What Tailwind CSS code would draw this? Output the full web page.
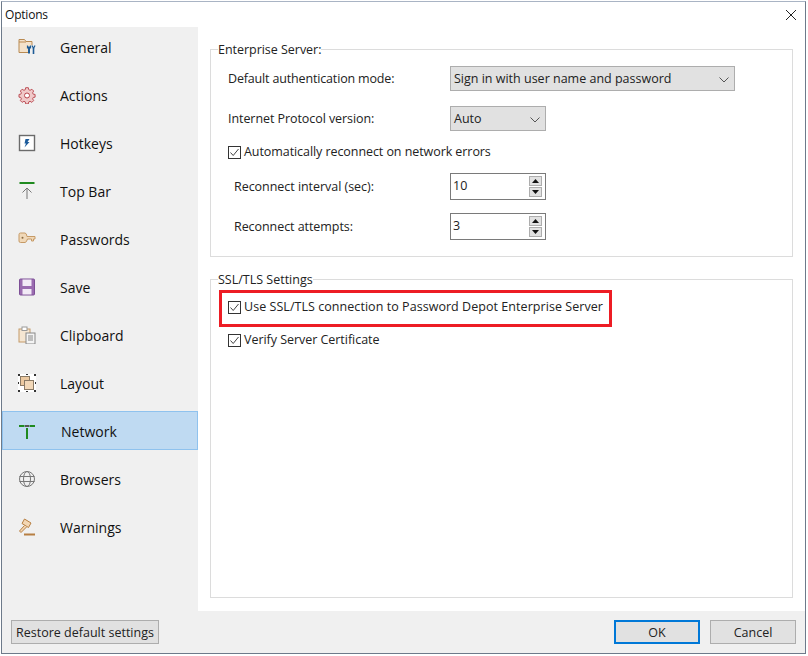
<!DOCTYPE html>
<html><head><meta charset="utf-8"><script src="https://cdn.jsdelivr.net/npm/@tailwindcss/browser@4"></script></head>
<body class="bg-white w-[808px] h-[656px] overflow-hidden font-['Open_Sans','Noto_Sans',sans-serif] text-[#111]">
<div class="ml-px mt-px w-[805px] h-[653px] border border-[#6d7a8a] border-t-[#a9b4c4] bg-white flex flex-col">
  <div class="h-[25px] flex items-center justify-between pl-[3px] pr-[8px] text-[12px] tracking-[-0.2px]">
    <span>Options</span>
    <svg width="12" height="12" viewBox="0 0 12 12" stroke="#222" stroke-width="1" fill="none"><path d="M1 1l10 10M11 1L1 11"/></svg>
  </div>
  <div class="flex-1 flex min-h-0">
    <nav class="w-[196px] bg-[#f0f0f0] flex flex-col gap-[9px] text-[14px] pb-[3px]">
      <div class="h-[39px] flex items-center pl-[16px] gap-[24px]"><svg width="18" height="18" viewBox="0 0 18 18" fill="none"><path d="M10 14.500H1V1.500H6.500L8 3.500H14V7" stroke="#b98a52" fill="#f3e2cb"/><path d="M1 4h7" stroke="#b98a52"/><path d="M11 8.500v7" stroke="#1e5c96" stroke-width="2"/><path d="M9.500 7.500v2.500h3V7.500" stroke="#1e5c96" stroke-width="1.200"/><path d="M15.500 10v6" stroke="#1e5c96" stroke-width="1.600"/><path d="M14 7.500l1.500 3 1.500-3" stroke="#1e5c96" stroke-width="1.200"/></svg><span class="pt-[2px]">General</span></div>
      <div class="h-[39px] flex items-center pl-[16px] gap-[24px]"><svg width="18" height="18" viewBox="0 0 18 18" fill="#f0c9c9" stroke="#b8434b"><path d="M7.500 1h3l.4 2.200 1.500.7 2-1.200 2 2-1.200 2 .7 1.500 2.100.3v3l-2.100.4-.7 1.500 1.200 1.900-2 2-2-1.200-1.500.7-.4 2.200h-3l-.4-2.200-1.500-.7-2 1.200-2-2 1.200-1.900-.7-1.500-2-.4v-3l2-.3.7-1.500-1.200-2 2-2 2 1.200 1.500-.7Z" transform="translate(.9 .8) scale(.9)"/><circle cx="9" cy="9.500" r="2.500" fill="#fff"/></svg><span class="pt-[2px]">Actions</span></div>
      <div class="h-[39px] flex items-center pl-[16px] gap-[24px]"><svg width="18" height="18" viewBox="0 0 18 18"><rect x="1.500" y="1.500" width="15" height="15" fill="#fff" stroke="#6b6b6b" stroke-width="1.400"/><path d="M11.500 5H7.500L6.500 9.500H8L6.500 13.500 11.500 8H9.500L11.500 5Z" fill="#1d5c9c"/></svg><span class="pt-[2px]">Hotkeys</span></div>
      <div class="h-[39px] flex items-center pl-[16px] gap-[24px]"><svg width="18" height="18" viewBox="0 0 18 18" fill="none"><path d="M1.500 1h15" stroke="#1f8a1f" stroke-width="2"/><path d="M9 17V6M4.500 10.500 9 6l4.500 4.500" stroke="#777"/></svg><span class="pt-[2px]">Top Bar</span></div>
      <div class="h-[39px] flex items-center pl-[16px] gap-[24px]"><svg width="18" height="18" viewBox="0 0 18 18" fill="#f0d8b8" stroke="#c69a66"><path d="M1 4.500Q1 3 2.500 3H7Q8.500 3 9 6.500H17V9H15.500V11H13.500V9H9.500Q8.500 12.500 7 12.500H2.500Q1 12.500 1 11Z"/><circle cx="4.500" cy="7.800" r="1" fill="#8a6a40" stroke="none"/></svg><span class="pt-[2px]">Passwords</span></div>
      <div class="h-[39px] flex items-center pl-[16px] gap-[24px]"><svg width="18" height="18" viewBox="0 0 18 18"><rect x="1.500" y="1" width="15" height="16" rx="1" fill="#9a6bb0" stroke="#7d4f96"/><rect x="4.500" y="1.500" width="9" height="6.500" fill="#f2eaf6"/><rect x="4.500" y="11" width="9" height="5.500" fill="#f2eaf6"/></svg><span class="pt-[2px]">Save</span></div>
      <div class="h-[39px] flex items-center pl-[16px] gap-[24px]"><svg width="18" height="18" viewBox="0 0 18 18"><rect x="1" y="3" width="11" height="13" fill="#f5e6d2" stroke="#c49a68"/><rect x="4" y="1" width="5" height="3.500" fill="#fff" stroke="#999"/><rect x="8" y="7" width="9" height="11" fill="#f4f4f4" stroke="#888"/><path d="M10 10h5M10 12h5M10 14h5" stroke="#888"/></svg><span class="pt-[2px]">Clipboard</span></div>
      <div class="h-[39px] flex items-center pl-[16px] gap-[24px]"><svg width="18" height="18" viewBox="0 0 18 18"><rect x="0" y="0" width="18" height="18" fill="#fff"/><rect x="2.500" y="2.500" width="9" height="9" fill="#ecc9a0" stroke="#8a7a65"/><rect x="6.500" y="6.500" width="9" height="9" fill="#f2d8b8" stroke="#8a7a65"/><path d="M0 0h2v2H0zM16 0h2v2h-2zM0 16h2v2H0zM16 16h2v2h-2zM8 0h2v1H8zM8 17h2v1H8zM0 8h1v2H0zM17 8h1v2h-1z" fill="#333"/></svg><span class="pt-[2px]">Layout</span></div>
      <div class="h-[39px] flex items-center pl-[15px] gap-[25px] bg-[#bfdaf2] border border-[#8fc2ee]"><svg width="18" height="18" viewBox="0 0 18 18" fill="none" stroke="#1f8a1f" stroke-width="2"><path d="M1 4h5.500M11.500 4H17M9 6v11"/><rect x="7" y="3" width="4" height="2" fill="#555" stroke="none"/></svg><span class="pt-[2px]">Network</span></div>
      <div class="h-[39px] flex items-center pl-[16px] gap-[24px]"><svg width="18" height="18" viewBox="0 0 18 18" fill="none" stroke="#777"><circle cx="9" cy="9" r="7.500"/><ellipse cx="9" cy="9" rx="3.500" ry="7.500"/><path d="M1.500 6.500h15M1.500 11.500h15"/></svg><span class="pt-[2px]">Browsers</span></div>
      <div class="h-[39px] flex items-center pl-[16px] gap-[24px]"><svg width="18" height="18" viewBox="0 0 18 18" stroke="#b77f42" fill="#f3d7b4"><path d="M6.500 1 13 5 10.500 9.500 4 5.500Z"/><path d="M6.500 7.500 1.500 13 3 14.500 8.500 9"/><path d="M6 16.500h11" stroke-width="2"/></svg><span class="pt-[2px]">Warnings</span></div>
    </nav>
    <main class="flex-1 bg-white px-[12px] relative text-[12.500px] text-[#222]">
      <fieldset class="mt-[14px] h-[216px] border border-[#dcdcdc] pl-[17px] flex flex-col">
        <legend class="-ml-[10px] pt-px leading-[16px] tracking-[-0.03px]">Enterprise Server:</legend>
        <div class="flex items-center h-[25px] mt-[8px]"><span class="w-[222px] pt-px shrink-0 tracking-[-0.16px]">Default authentication mode:</span><div class="w-[285px] h-[25px] pt-[2px] bg-[#e1e1e1] border border-[#adadad] flex items-center justify-between pl-[3px] pr-[5px]"><span>Sign in with user name and password</span><svg width="10" height="6" viewBox="0 0 10 6" fill="none" stroke="#555"><path d="M.5.500 5 5 9.500.500"/></svg></div></div>
        <div class="flex items-center h-[25px] mt-[15px]"><span class="w-[222px] pt-px shrink-0 tracking-[-0.07px]">Internet Protocol version:</span><div class="w-[96px] h-[25px] pt-[2px] bg-[#e1e1e1] border border-[#adadad] flex items-center justify-between pl-[3px] pr-[5px]"><span>Auto</span><svg width="10" height="6" viewBox="0 0 10 6" fill="none" stroke="#555"><path d="M.5.500 5 5 9.500.500"/></svg></div></div>
        <label class="flex items-center gap-[3px] mt-[11px] h-[20px] tracking-[-0.07px]"><span class="w-[13px] h-[13px] border border-[#333] flex items-center justify-center"><svg width="11" height="11" viewBox="0 0 11 11" fill="none" stroke="#444"><path d="M1.500 5.500 4.200 8.500 9.500 2"/></svg></span>Automatically reconnect on network errors</label>
        <div class="flex items-center h-[27px] mt-[11px] pl-[6px]"><span class="w-[216px] pt-[2px] shrink-0 tracking-[-0.04px]">Reconnect interval (sec):</span><div class="w-[96px] h-[27px] border border-[#7a7a7a] flex items-center justify-between pl-[2px] pr-[3px]"><span>10</span><div class="flex flex-col gap-px"><div class="w-[13px] h-[10px] bg-[#e1e1e1] border border-[#adadad] flex items-center justify-center"><svg width="7" height="4" viewBox="0 0 7 4"><path d="M3.500 0 7 4H0Z" fill="#111"/></svg></div><div class="w-[13px] h-[10px] bg-[#e1e1e1] border border-[#adadad] flex items-center justify-center"><svg width="7" height="4" viewBox="0 0 7 4"><path d="M0 0H7L3.500 4Z" fill="#111"/></svg></div></div></div></div>
        <div class="flex items-center h-[27px] mt-[13px] pl-[6px]"><span class="w-[216px] pt-[2px] shrink-0 tracking-[-0.06px]">Reconnect attempts:</span><div class="w-[96px] h-[27px] border border-[#7a7a7a] flex items-center justify-between pl-[2px] pr-[3px]"><span>3</span><div class="flex flex-col gap-px"><div class="w-[13px] h-[10px] bg-[#e1e1e1] border border-[#adadad] flex items-center justify-center"><svg width="7" height="4" viewBox="0 0 7 4"><path d="M3.500 0 7 4H0Z" fill="#111"/></svg></div><div class="w-[13px] h-[10px] bg-[#e1e1e1] border border-[#adadad] flex items-center justify-center"><svg width="7" height="4" viewBox="0 0 7 4"><path d="M0 0H7L3.500 4Z" fill="#111"/></svg></div></div></div></div>
      </fieldset>
      <fieldset class="mt-[13px] h-[328px] border border-[#dcdcdc] pl-[17px] flex flex-col">
        <legend class="-ml-[10px] pt-[2px] leading-[16px]">SSL/TLS Settings</legend>
        <label class="flex items-center gap-[3px] mt-[9px] h-[20px] tracking-[0.05px]"><span class="w-[13px] h-[13px] border border-[#333] flex items-center justify-center"><svg width="11" height="11" viewBox="0 0 11 11" fill="none" stroke="#444"><path d="M1.500 5.500 4.200 8.500 9.500 2"/></svg></span>Use SSL/TLS connection to Password Depot Enterprise Server</label>
        <label class="flex items-center gap-[3px] mt-[13px] h-[20px] tracking-[-0.04px]"><span class="w-[13px] h-[13px] border border-[#333] flex items-center justify-center"><svg width="11" height="11" viewBox="0 0 11 11" fill="none" stroke="#444"><path d="M1.500 5.500 4.200 8.500 9.500 2"/></svg></span>Verify Server Certificate</label>
      </fieldset>
      <div class="absolute left-[21px] top-[263px] w-[393px] h-[37px] border-[3px] border-[#ed1c24]"></div>
    </main>
  </div>
  <div class="h-[42px] bg-[#f0f0f0] flex items-center justify-between pl-[9px] pr-[9px] text-[12.500px] text-[#222]">
    <div class="w-[148px] h-[24px] pt-[2px] bg-[#e1e1e1] border border-[#adadad] flex items-center justify-center">Restore default settings</div>
    <div class="flex gap-[10px]">
      <div class="w-[86px] h-[24px] pt-[2px] bg-[#e1e1e1] border-2 border-[#0078d7] flex items-center justify-center">OK</div>
      <div class="w-[86px] h-[24px] pt-[2px] bg-[#e1e1e1] border border-[#adadad] flex items-center justify-center">Cancel</div>
    </div>
  </div>
</div>
</body></html>
